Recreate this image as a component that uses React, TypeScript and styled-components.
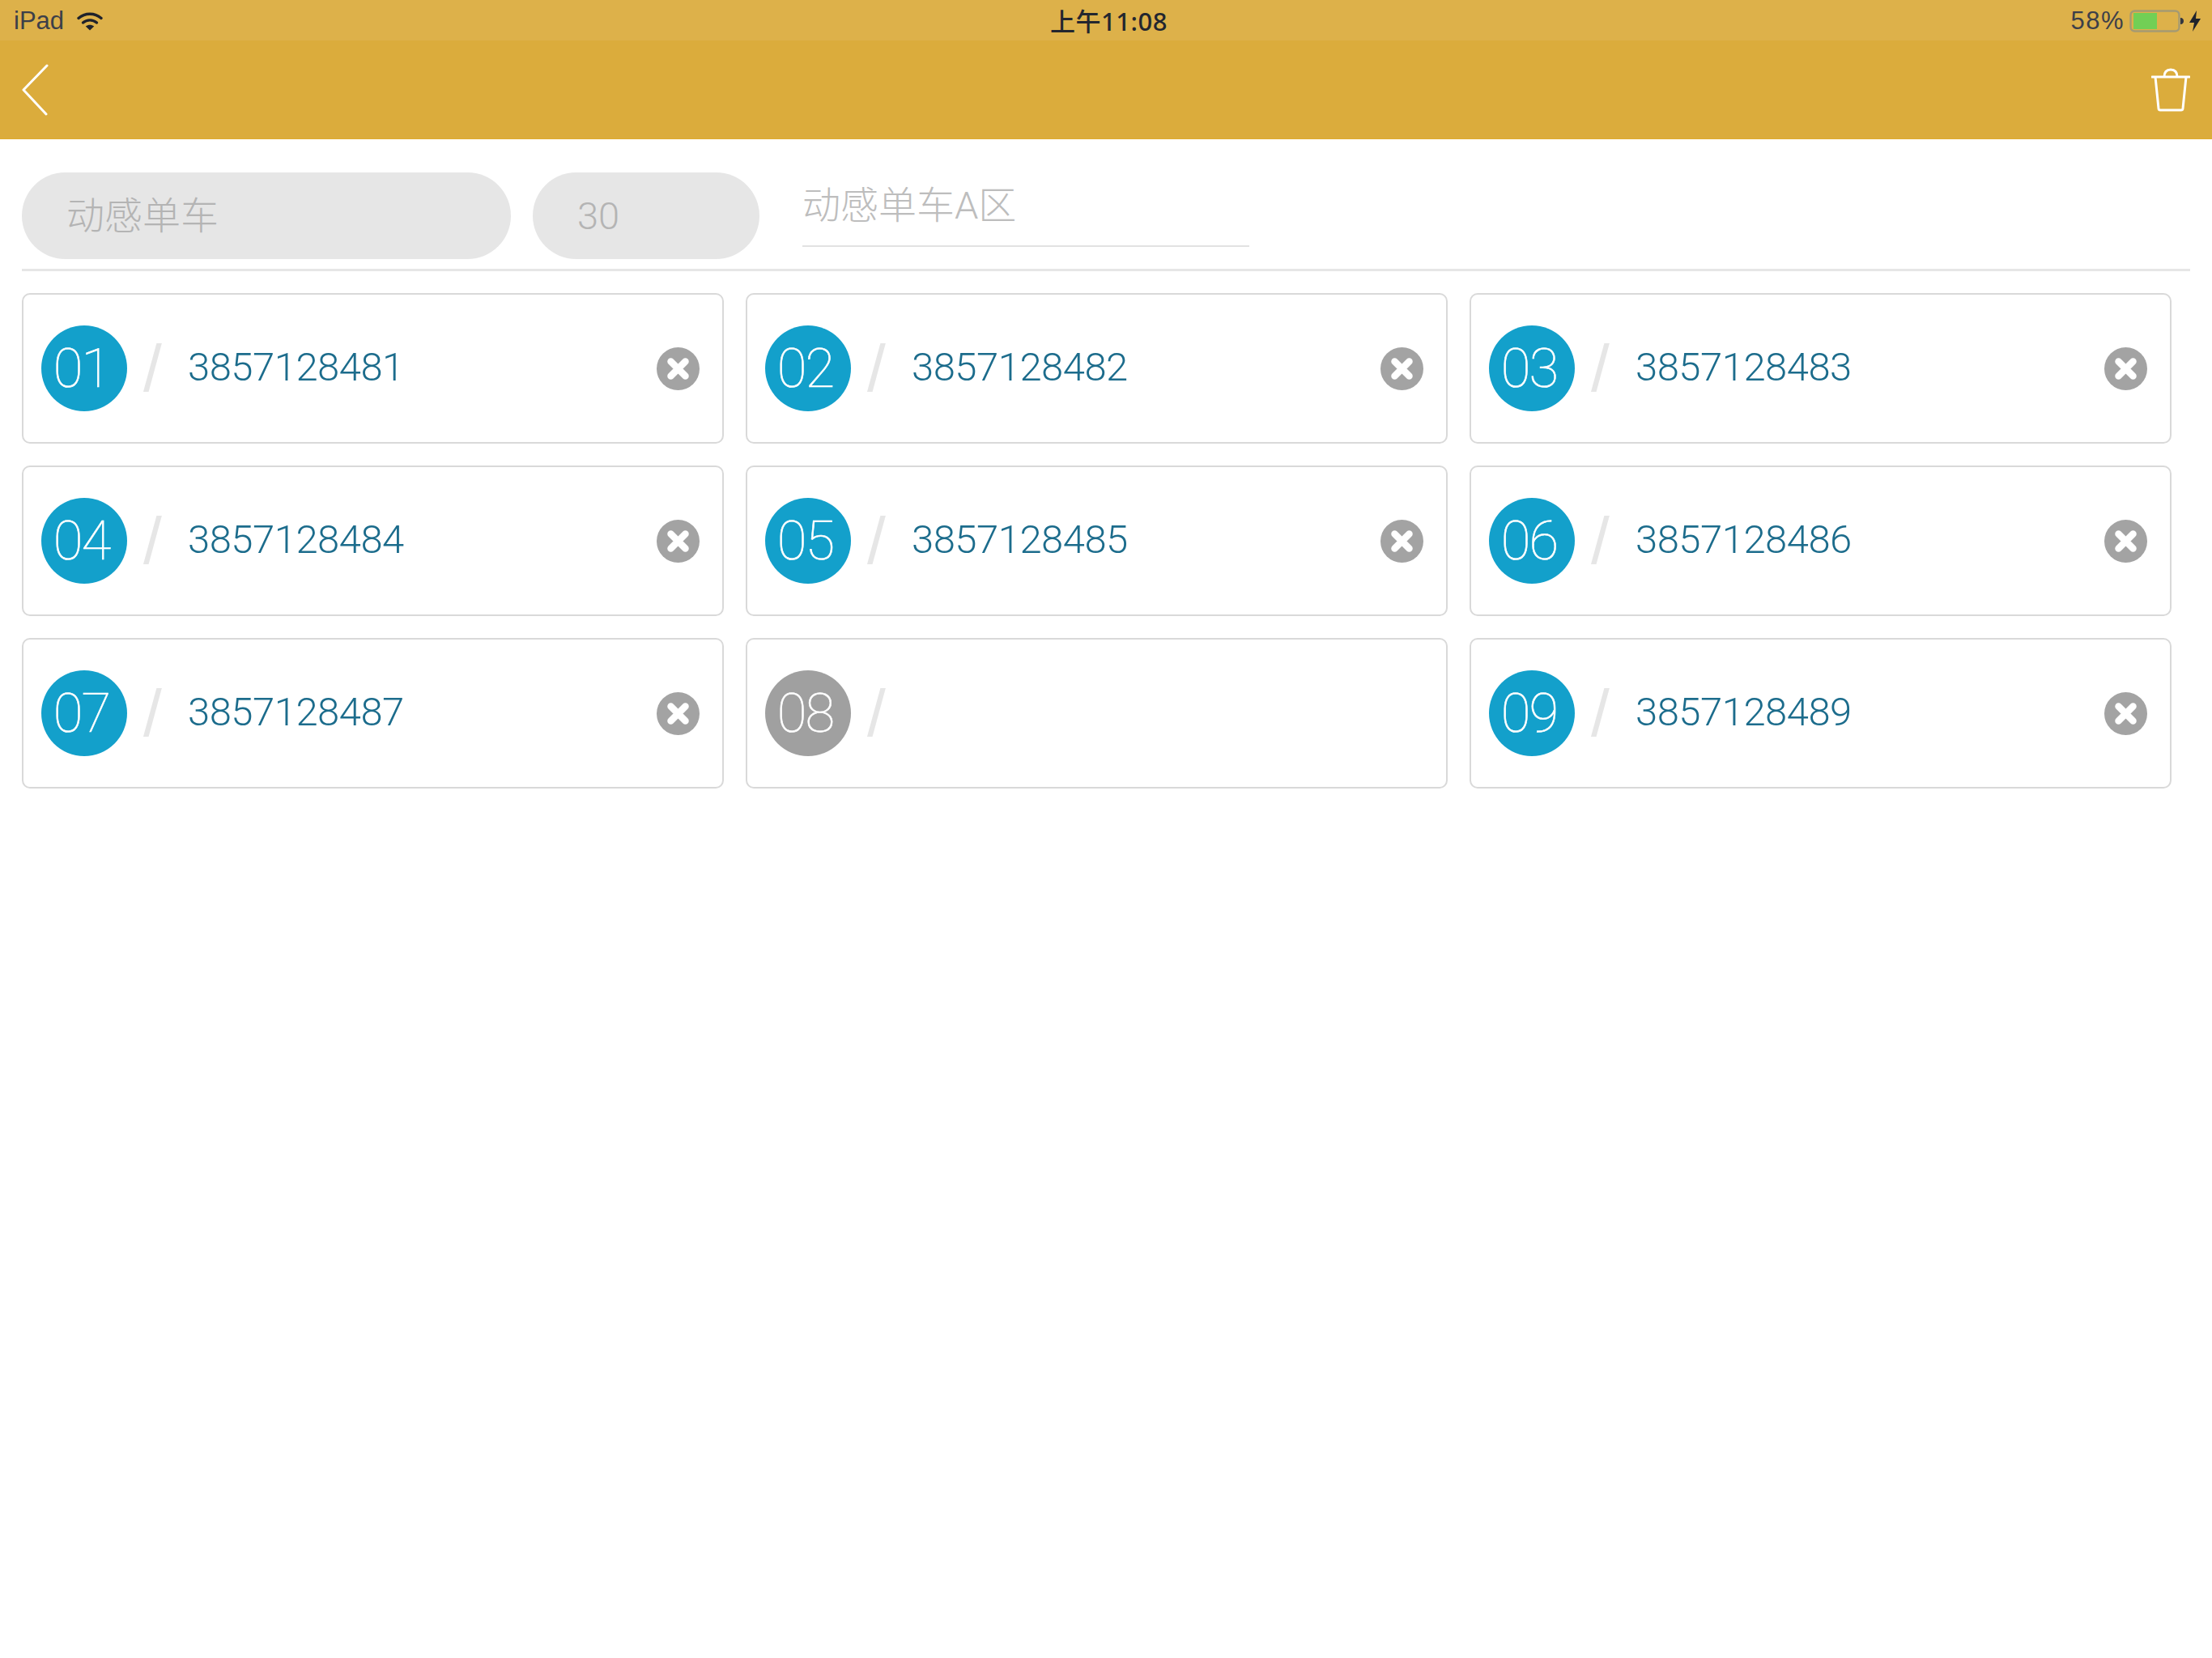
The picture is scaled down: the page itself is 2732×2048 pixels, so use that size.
import React from "react";
import styled, { createGlobalStyle } from "styled-components";

const GlobalStyle = createGlobalStyle`
  html, body {
    margin: 0;
    padding: 0;
    background: #ffffff;
  }
  * {
    box-sizing: border-box;
  }
`;

const Page = styled.div`
  width: 2732px;
  height: 2048px;
  background: #ffffff;
  overflow: hidden;
  font-family: Roboto, "Noto Sans CJK SC", sans-serif;
`;

const StatusBar = styled.div`
  height: 50px;
  background: #ddb14a;
  padding: 2px 14px 0 17px;
  display: grid;
  grid-template-columns: 1fr auto 1fr;
  align-items: center;
  color: #3c3f49;
  font-family: "Liberation Sans", "Noto Sans CJK SC", sans-serif;
  font-size: 31px;
`;

const StatusLeft = styled.div`
  display: flex;
  align-items: center;
  gap: 16px;
`;

const StatusRight = styled.div`
  display: flex;
  align-items: center;
  justify-content: flex-end;
  gap: 6px;
`;

const Percent = styled.span`
  letter-spacing: 1.5px;
`;

const Clock = styled.div`
  padding: 0 0 3px 4px;
  font-family: "Noto Sans", "Noto Sans CJK SC", sans-serif;
  font-weight: 500;
  font-size: 31px;
  letter-spacing: 0.5px;
  color: #23262f;
`;

const NavBar = styled.div`
  height: 122px;
  background: #dbac3c;
  border-bottom: 1px solid #e0ab2c;
  padding: 0 27px;
  display: flex;
  align-items: center;
  justify-content: space-between;
`;

const Content = styled.div`
  padding: 0 27px;
`;

const FormRow = styled.div`
  height: 163px;
  padding-top: 41px;
  border-bottom: 3px solid #e6e6e6;
  display: flex;
  align-items: flex-start;
  gap: 27px;
`;

const Pill = styled.div<{ $width: number }>`
  width: ${(p) => p.$width}px;
  height: 107px;
  padding-left: 55px;
  border-radius: 54px;
  background: #e6e6e6;
  color: #b4b4b4;
  font-size: 47px;
  font-weight: 300;
  line-height: 107px;
`;

const AreaInput = styled.div`
  width: 552px;
  height: 92px;
  margin-left: 26px;
  border-bottom: 2px solid #e2e2e2;
  color: #bdbdbd;
  font-size: 47px;
  font-weight: 300;
  line-height: 82px;
`;

const CardGrid = styled.div`
  margin-top: 27px;
  display: grid;
  grid-template-columns: repeat(3, 867px);
  grid-auto-rows: 186px;
  column-gap: 27px;
  row-gap: 27px;
`;

const Card = styled.div`
  position: relative;
  border: 2px solid #d9d9d9;
  border-radius: 10px;
  background: #ffffff;
  padding-left: 22px;
  display: flex;
  align-items: center;
`;

const NumberBadge = styled.div<{ $empty: boolean }>`
  width: 106px;
  height: 106px;
  flex: none;
  padding-right: 7px;
  border-radius: 50%;
  background: ${(p) => (p.$empty ? "#a0a0a0" : "#13a0cb")};
  color: #ffffff;
  font-size: 67px;
  font-weight: 100;
  letter-spacing: -2px;
  line-height: 106px;
  text-align: center;
  -webkit-text-stroke: 0.6px #ffffff;
`;

const Slash = styled.div`
  width: 22px;
  height: 60px;
  flex: none;
  margin-left: 20px;
  color: #e6e6e6;
  font-family: "Liberation Sans", sans-serif;
  font-size: 82px;
  line-height: 60px;
  text-align: center;
`;

const Serial = styled.div`
  margin-left: 33px;
  padding-bottom: 3px;
  color: #1c6c8c;
  font-size: 49px;
  font-weight: 300;
  letter-spacing: -0.5px;
`;

const RemoveButton = styled.div`
  position: absolute;
  top: 65px;
  right: 28px;
  width: 53px;
  height: 53px;
  display: block;
`;

const cards = [
  { no: "01", serial: "3857128481" },
  { no: "02", serial: "3857128482" },
  { no: "03", serial: "3857128483" },
  { no: "04", serial: "3857128484" },
  { no: "05", serial: "3857128485" },
  { no: "06", serial: "3857128486" },
  { no: "07", serial: "3857128487" },
  { no: "08", serial: "" },
  { no: "09", serial: "3857128489" },
];

function WifiIcon() {
  return (
    <svg width="32" height="24" viewBox="0 0 32 24" fill="none">
      <path d="M2 8.5C10 1.5 22 1.5 30 8.5" stroke="#1f222b" strokeWidth="3.4" strokeLinecap="round" />
      <path d="M7.5 14C12.5 9.8 19.5 9.8 24.5 14" stroke="#1f222b" strokeWidth="3.4" strokeLinecap="round" />
      <path d="M10.8 18.6C14 16 18 16 21.2 18.6L16 23.5Z" fill="#1f222b" />
    </svg>
  );
}

function BatteryIcon() {
  return (
    <svg width="68" height="28" viewBox="0 0 68 28" fill="none">
      <rect x="1.5" y="1.5" width="60" height="25" rx="5" stroke="#a59a72" strokeWidth="2.4" />
      <path d="M5 4H34V24H5Z" fill="#72cf55" />
      <path d="M63 10C66 10 67 12 67 14C67 16 66 18 63 18Z" fill="#33363f" />
    </svg>
  );
}

function BoltIcon() {
  return (
    <svg width="14" height="26" viewBox="0 0 14 26">
      <path d="M9 0L0 15H6L4 26L14 10H8Z" fill="#1f222b" />
    </svg>
  );
}

function BackIcon() {
  return (
    <svg width="33" height="64" viewBox="0 0 33 64" fill="none">
      <path d="M31 2L2 32L30 62" stroke="#ffffff" strokeWidth="3" strokeLinecap="round" strokeLinejoin="round" />
    </svg>
  );
}

function TrashIcon() {
  return (
    <svg width="48" height="54" viewBox="0 0 48 54" fill="none">
      <path d="M1 11H47" stroke="#ffffff" strokeWidth="3" strokeLinecap="round" />
      <path d="M5 11L9 50C9.2 51.5 10 52 11 52H37C38 52 38.8 51.5 39 50L43 11" stroke="#ffffff" strokeWidth="3" />
      <path d="M16 11C16 5 19 2 24 2C29 2 32 5 32 11" stroke="#ffffff" strokeWidth="3" />
    </svg>
  );
}

function RemoveIcon() {
  return (
    <svg width="53" height="53" viewBox="0 0 53 53">
      <circle cx="26.5" cy="26.5" r="26.5" fill="#a3a3a3" />
      <path d="M17.5 17.5L35.5 35.5M35.5 17.5L17.5 35.5" stroke="#ffffff" strokeWidth="8.5" strokeLinecap="round" />
    </svg>
  );
}

export default function App(): React.JSX.Element {
  return (
    <Page>
      <GlobalStyle />
      <StatusBar>
        <StatusLeft>
          <span>iPad</span>
          <WifiIcon />
        </StatusLeft>
        <Clock>上午11:08</Clock>
        <StatusRight>
          <Percent>58%</Percent>
          <BatteryIcon />
          <BoltIcon />
        </StatusRight>
      </StatusBar>
      <NavBar>
        <BackIcon />
        <TrashIcon />
      </NavBar>
      <Content>
        <FormRow>
          <Pill $width={604}>动感单车</Pill>
          <Pill $width={280}>30</Pill>
          <AreaInput>动感单车A区</AreaInput>
        </FormRow>
        <CardGrid>
          {cards.map((card) => (
            <Card key={card.no}>
              <NumberBadge $empty={!card.serial}>{card.no}</NumberBadge>
              <Slash>/</Slash>
              {card.serial && (
                <>
                  <Serial>{card.serial}</Serial>
                  <RemoveButton>
                    <RemoveIcon />
                  </RemoveButton>
                </>
              )}
            </Card>
          ))}
        </CardGrid>
      </Content>
    </Page>
  );
}
